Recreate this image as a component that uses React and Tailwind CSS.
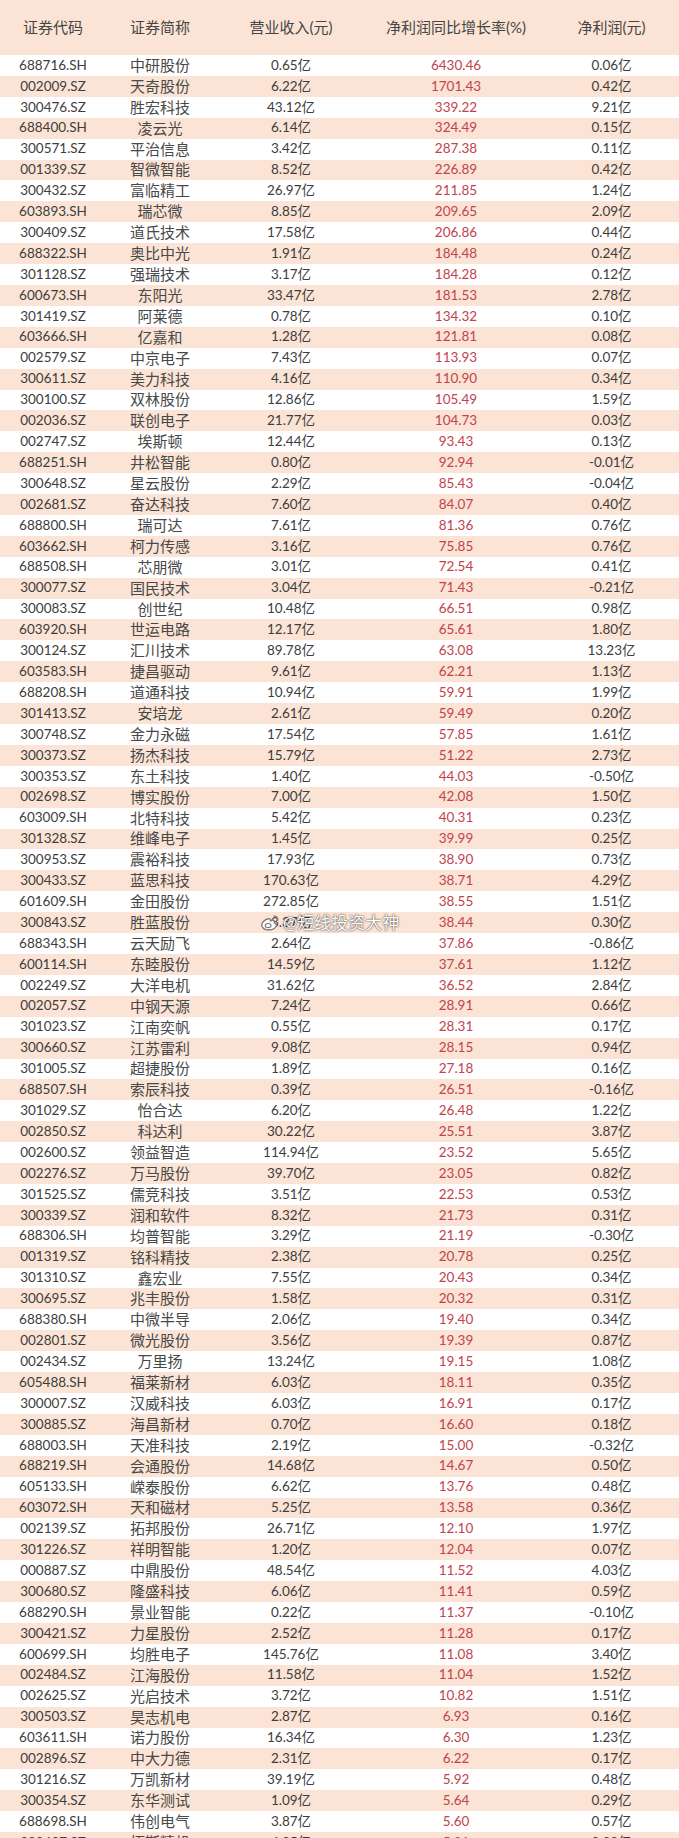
const rows = [
  ["688716.SH", "中研股份", "0.65亿", "6430.46", "0.06亿"],
  ["002009.SZ", "天奇股份", "6.22亿", "1701.43", "0.42亿"],
  ["300476.SZ", "胜宏科技", "43.12亿", "339.22", "9.21亿"],
  ["688400.SH", "凌云光", "6.14亿", "324.49", "0.15亿"],
  ["300571.SZ", "平治信息", "3.42亿", "287.38", "0.11亿"],
  ["001339.SZ", "智微智能", "8.52亿", "226.89", "0.42亿"],
  ["300432.SZ", "富临精工", "26.97亿", "211.85", "1.24亿"],
  ["603893.SH", "瑞芯微", "8.85亿", "209.65", "2.09亿"],
  ["300409.SZ", "道氏技术", "17.58亿", "206.86", "0.44亿"],
  ["688322.SH", "奥比中光", "1.91亿", "184.48", "0.24亿"],
  ["301128.SZ", "强瑞技术", "3.17亿", "184.28", "0.12亿"],
  ["600673.SH", "东阳光", "33.47亿", "181.53", "2.78亿"],
  ["301419.SZ", "阿莱德", "0.78亿", "134.32", "0.10亿"],
  ["603666.SH", "亿嘉和", "1.28亿", "121.81", "0.08亿"],
  ["002579.SZ", "中京电子", "7.43亿", "113.93", "0.07亿"],
  ["300611.SZ", "美力科技", "4.16亿", "110.90", "0.34亿"],
  ["300100.SZ", "双林股份", "12.86亿", "105.49", "1.59亿"],
  ["002036.SZ", "联创电子", "21.77亿", "104.73", "0.03亿"],
  ["002747.SZ", "埃斯顿", "12.44亿", "93.43", "0.13亿"],
  ["688251.SH", "井松智能", "0.80亿", "92.94", "-0.01亿"],
  ["300648.SZ", "星云股份", "2.29亿", "85.43", "-0.04亿"],
  ["002681.SZ", "奋达科技", "7.60亿", "84.07", "0.40亿"],
  ["688800.SH", "瑞可达", "7.61亿", "81.36", "0.76亿"],
  ["603662.SH", "柯力传感", "3.16亿", "75.85", "0.76亿"],
  ["688508.SH", "芯朋微", "3.01亿", "72.54", "0.41亿"],
  ["300077.SZ", "国民技术", "3.04亿", "71.43", "-0.21亿"],
  ["300083.SZ", "创世纪", "10.48亿", "66.51", "0.98亿"],
  ["603920.SH", "世运电路", "12.17亿", "65.61", "1.80亿"],
  ["300124.SZ", "汇川技术", "89.78亿", "63.08", "13.23亿"],
  ["603583.SH", "捷昌驱动", "9.61亿", "62.21", "1.13亿"],
  ["688208.SH", "道通科技", "10.94亿", "59.91", "1.99亿"],
  ["301413.SZ", "安培龙", "2.61亿", "59.49", "0.20亿"],
  ["300748.SZ", "金力永磁", "17.54亿", "57.85", "1.61亿"],
  ["300373.SZ", "扬杰科技", "15.79亿", "51.22", "2.73亿"],
  ["300353.SZ", "东土科技", "1.40亿", "44.03", "-0.50亿"],
  ["002698.SZ", "博实股份", "7.00亿", "42.08", "1.50亿"],
  ["603009.SH", "北特科技", "5.42亿", "40.31", "0.23亿"],
  ["301328.SZ", "维峰电子", "1.45亿", "39.99", "0.25亿"],
  ["300953.SZ", "震裕科技", "17.93亿", "38.90", "0.73亿"],
  ["300433.SZ", "蓝思科技", "170.63亿", "38.71", "4.29亿"],
  ["601609.SH", "金田股份", "272.85亿", "38.55", "1.51亿"],
  ["300843.SZ", "胜蓝股份", "3.37亿", "38.44", "0.30亿"],
  ["688343.SH", "云天励飞", "2.64亿", "37.86", "-0.86亿"],
  ["600114.SH", "东睦股份", "14.59亿", "37.61", "1.12亿"],
  ["002249.SZ", "大洋电机", "31.62亿", "36.52", "2.84亿"],
  ["002057.SZ", "中钢天源", "7.24亿", "28.91", "0.66亿"],
  ["301023.SZ", "江南奕帆", "0.55亿", "28.31", "0.17亿"],
  ["300660.SZ", "江苏雷利", "9.08亿", "28.15", "0.94亿"],
  ["301005.SZ", "超捷股份", "1.89亿", "27.18", "0.16亿"],
  ["688507.SH", "索辰科技", "0.39亿", "26.51", "-0.16亿"],
  ["301029.SZ", "怡合达", "6.20亿", "26.48", "1.22亿"],
  ["002850.SZ", "科达利", "30.22亿", "25.51", "3.87亿"],
  ["002600.SZ", "领益智造", "114.94亿", "23.52", "5.65亿"],
  ["002276.SZ", "万马股份", "39.70亿", "23.05", "0.82亿"],
  ["301525.SZ", "儒竞科技", "3.51亿", "22.53", "0.53亿"],
  ["300339.SZ", "润和软件", "8.32亿", "21.73", "0.31亿"],
  ["688306.SH", "均普智能", "3.29亿", "21.19", "-0.30亿"],
  ["001319.SZ", "铭科精技", "2.38亿", "20.78", "0.25亿"],
  ["301310.SZ", "鑫宏业", "7.55亿", "20.43", "0.34亿"],
  ["300695.SZ", "兆丰股份", "1.58亿", "20.32", "0.31亿"],
  ["688380.SH", "中微半导", "2.06亿", "19.40", "0.34亿"],
  ["002801.SZ", "微光股份", "3.56亿", "19.39", "0.87亿"],
  ["002434.SZ", "万里扬", "13.24亿", "19.15", "1.08亿"],
  ["605488.SH", "福莱新材", "6.03亿", "18.11", "0.35亿"],
  ["300007.SZ", "汉威科技", "6.03亿", "16.91", "0.17亿"],
  ["300885.SZ", "海昌新材", "0.70亿", "16.60", "0.18亿"],
  ["688003.SH", "天准科技", "2.19亿", "15.00", "-0.32亿"],
  ["688219.SH", "会通股份", "14.68亿", "14.67", "0.50亿"],
  ["605133.SH", "嵘泰股份", "6.62亿", "13.76", "0.48亿"],
  ["603072.SH", "天和磁材", "5.25亿", "13.58", "0.36亿"],
  ["002139.SZ", "拓邦股份", "26.71亿", "12.10", "1.97亿"],
  ["301226.SZ", "祥明智能", "1.20亿", "12.04", "0.07亿"],
  ["000887.SZ", "中鼎股份", "48.54亿", "11.52", "4.03亿"],
  ["300680.SZ", "隆盛科技", "6.06亿", "11.41", "0.59亿"],
  ["688290.SH", "景业智能", "0.22亿", "11.37", "-0.10亿"],
  ["300421.SZ", "力星股份", "2.52亿", "11.28", "0.17亿"],
  ["600699.SH", "均胜电子", "145.76亿", "11.08", "3.40亿"],
  ["002484.SZ", "江海股份", "11.58亿", "11.04", "1.52亿"],
  ["002625.SZ", "光启技术", "3.72亿", "10.82", "1.51亿"],
  ["300503.SZ", "昊志机电", "2.87亿", "6.93", "0.16亿"],
  ["603611.SH", "诺力股份", "16.34亿", "6.30", "1.23亿"],
  ["002896.SZ", "中大力德", "2.31亿", "6.22", "0.17亿"],
  ["301216.SZ", "万凯新材", "39.19亿", "5.92", "0.48亿"],
  ["300354.SZ", "东华测试", "1.09亿", "5.64", "0.29亿"],
  ["688698.SH", "伟创电气", "3.87亿", "5.60", "0.57亿"],
  ["300607.SZ", "拓斯精机", "4.35亿", "5.21", "0.39亿"],
];

function WeiboMark() {
  return (
    <svg width="20" height="18" viewBox="0 0 18 16" fill="none">
      <path
        d="M7.5 4.2c-3.2 0.6-6 3.4-6 5.9 0 2.4 2.9 4.2 6.3 4.2 4.1 0 7-2.2 7-4.3 0-1.4-1.3-1.9-2-2.1 0.6-1.5 0.1-2.6-1.9-2.4-0.9 0.1-1.5 0.5-1.5 0.5 0.3-1.5-0.6-2.1-1.9-1.8z"
        stroke="#7a7a7a"
        strokeWidth="1.2"
        fill="#ffffff"
      />
      <ellipse cx="7.3" cy="10.3" rx="2.6" ry="1.9" stroke="#7a7a7a" strokeWidth="1" />
      <path d="M12.6 1.6c2 0.2 3.4 1.8 3.3 3.9" stroke="#7a7a7a" strokeWidth="1.1" strokeLinecap="round" />
    </svg>
  );
}

export default function App() {
  return (
    <div className="relative w-[679px] h-[1838px] overflow-hidden bg-white font-['Lato','Noto_Sans_CJK_SC',sans-serif] text-[#3d3d3d]">

      {/* Header */}
      <div className="grid grid-cols-[106px_108px_154px_176px_135px] h-[55px] items-center text-center bg-[#fbe4d5] text-[15px] text-[#454545]">
        <span>证券代码</span>
        <span>证券简称</span>
        <span>营业收入(元)</span>
        <span>净利润同比增长率(%)</span>
        <span>净利润(元)</span>
      </div>

      {/* Rows */}
      {rows.map((r, i) => (
        <div
          key={r[0] + i}
          className={
            "grid grid-cols-[106px_108px_154px_176px_135px] h-[20.92px] items-center text-center text-[13.5px] leading-none " +
            (i % 2 === 1 ? "bg-[#fbe4d5]" : "bg-white")
          }
        >
          <span>{r[0]}</span>
          <span className="text-[15px] text-[#484848]">{r[1]}</span>
          <span>{r[2]}</span>
          <span className="text-[#c2434c]">{r[3]}</span>
          <span>{r[4]}</span>
        </div>
      ))}

      {/* Watermark */}
      <div className="absolute left-[260px] top-[910px] flex items-center gap-[3px] text-[17px] text-white [text-shadow:0_0_2px_rgba(0,0,0,0.7),0_0_1px_rgba(0,0,0,0.5)]">
        <WeiboMark />
        <span>@短线投资大神</span>
      </div>
    </div>
  );
}
